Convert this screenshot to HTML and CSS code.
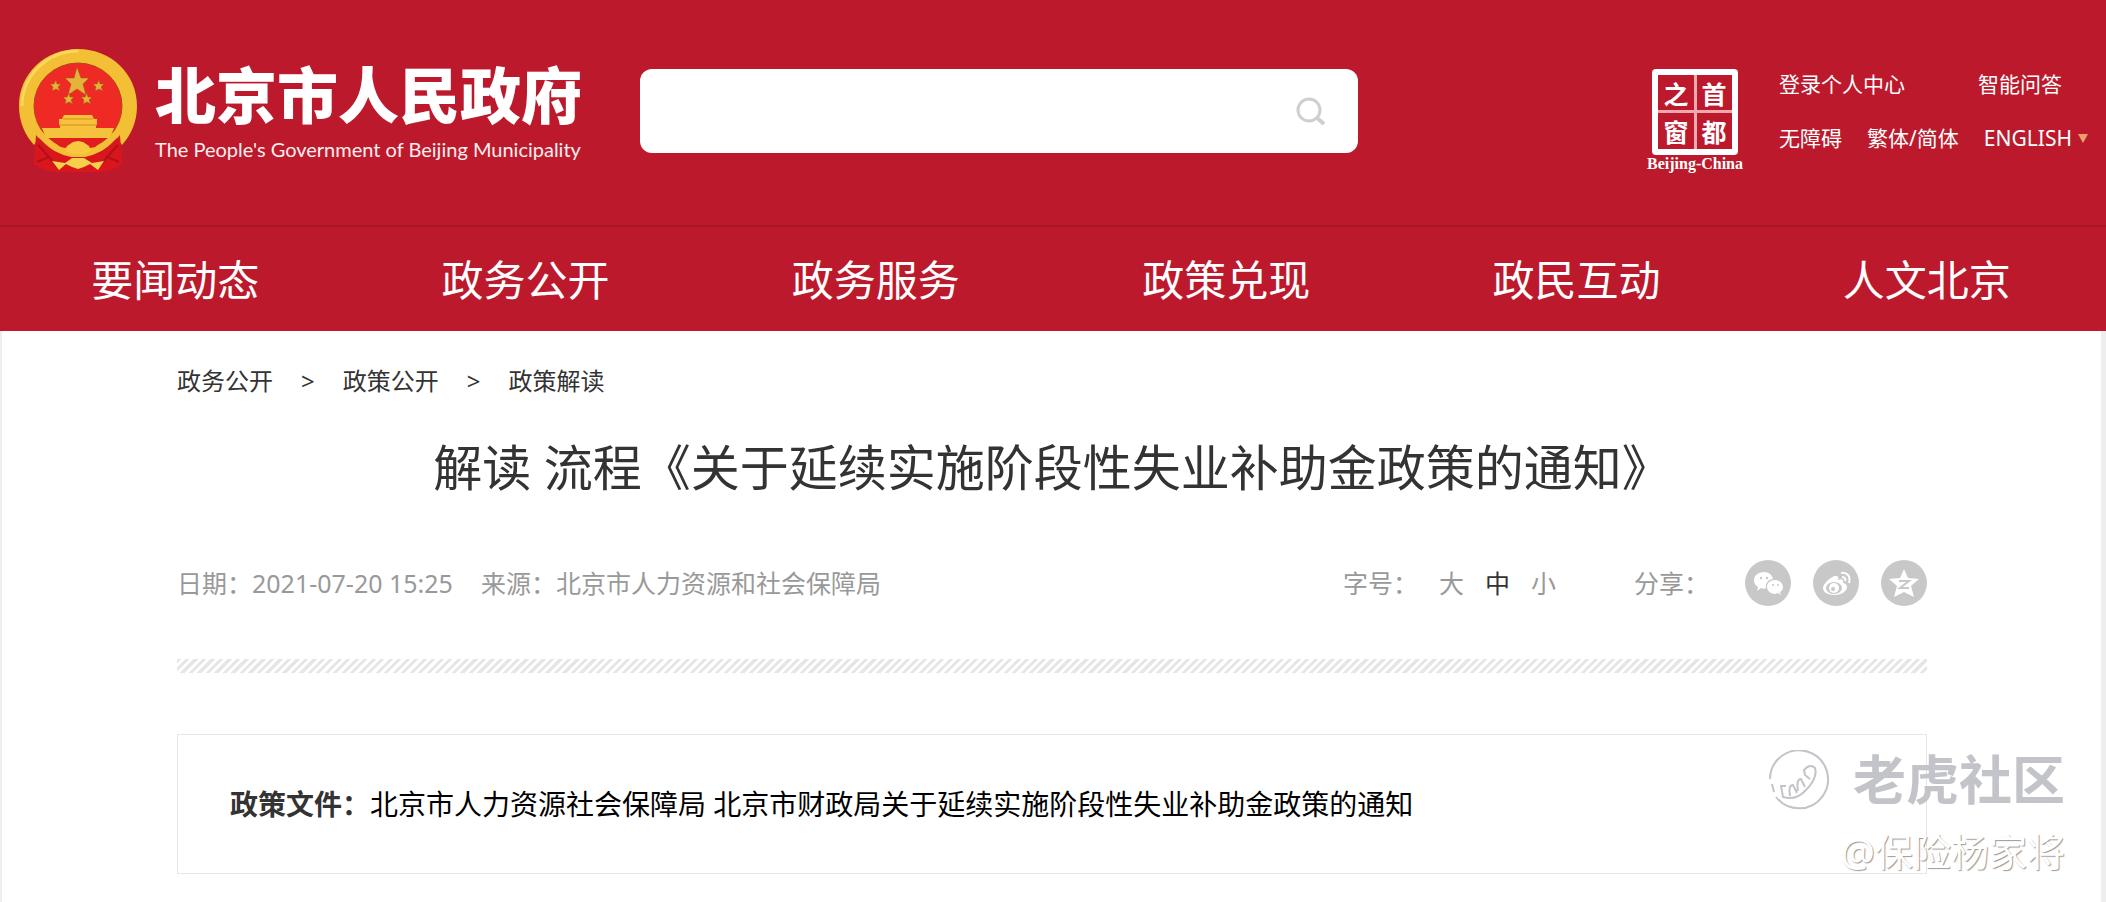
FILE: index.html
```html
<!DOCTYPE html>
<html lang="zh-CN">
<head>
    <meta charset="UTF-8">
    <meta name="viewport" content="width=device-width, initial-scale=1.0">
    <title>北京市人民政府</title>
    <link rel="stylesheet" href="styles.css">
</head>
<body>
    <!-- Header -->
    <header class="header">
        <div class="header-top">
            <a class="brand" href="#">
                <svg class="emblem" viewBox="0 0 118 124" aria-hidden="true">
                    <path d="M59 0 C26 0 0 25 0 57 C0 73 6 86 15 96 L20 89 Q34 104 50 110 L68 110 Q84 104 98 89 L103 96 C112 86 118 73 118 57 C118 25 92 0 59 0 Z" fill="#f3bf35"/>
                    <path d="M59 2 C28 2 3 27 3 57" fill="none" stroke="#fbd75e" stroke-width="3"/>
                    <ellipse cx="59" cy="57" rx="44" ry="43" fill="#ef2a24" stroke="#b5441b" stroke-width="1"/>
                    <path d="M30 89 H88 L76 98 Q70 100 66 96 L60 92 L52 96 Q46 101 40 97 Z" fill="#e01d1f"/>
                    <path d="M17 86 L22 92 Q34 104 52 108 L66 108 Q84 104 96 92 L101 86 L103 115 Q90 124 78 123 L40 123 Q28 124 15 115 Z" fill="#d8161b"/>
                    <path d="M19 96 L30 108 L18 113 M99 96 L88 108 L100 113 M30 108 L38 118 M88 108 L80 118" fill="none" stroke="#b30f18" stroke-width="2"/>
                    <g fill="#e5b23a" stroke="#a8561c" stroke-width="0.6">
                        <path d="M58 18 L62 29 L70 29 L64 35 L67 46 L58 40 L49 46 L52 35 L46 29 L55 29 Z"/>
                        <path d="M37 31 L38 35 L42 35 L39 38 L41 42 L37 40 L33 42 L34 38 L31 35 L35 35 Z"/>
                        <path d="M80 31 L81 35 L85 35 L82 38 L84 42 L80 40 L76 42 L77 38 L74 35 L78 35 Z"/>
                        <path d="M50 44 L51 48 L55 48 L52 51 L54 55 L50 53 L46 55 L47 51 L44 48 L48 48 Z"/>
                        <path d="M68 44 L69 48 L73 48 L70 51 L72 55 L68 53 L64 55 L65 51 L62 48 L66 48 Z"/>
                    </g>
                    <path d="M45 66 H73 L75 70 H78 V76 H40 V70 H43 Z M41 76 H77 V79 H95 L91 89 H27 L23 79 H41 Z" fill="#f6c23c"/>
                    <path d="M44 70 H74 M40 76 H78" stroke="#d98b22" stroke-width="1"/>
                    <path d="M59 92 L64 93 L70 97 L72 102 L64 105 H54 L46 102 L48 97 L54 93 Z" fill="#f8c93f"/>
                    <path d="M33 112 L46 114 L53 109 H65 L73 114 L85 112 L79 121 L71 115 L65 118 L59 120 L53 118 L47 115 L40 121 Z" fill="#f8cf4b"/>
                </svg>
                <span class="brand-text">
                    <span class="brand-name">北京市人民政府</span>
                    <span class="brand-sub">The People's Government of Beijing Municipality</span>
                </span>
            </a>

            <form class="search">
                <input type="text" class="search-input" aria-label="搜索">
                <button type="submit" class="search-button" aria-label="搜索">
                    <svg viewBox="0 0 30 28" aria-hidden="true">
                        <circle cx="13" cy="13" r="11" fill="none" stroke="#cfcfcf" stroke-width="3"/>
                        <path d="M21 21 L28 27" stroke="#cfcfcf" stroke-width="4"/>
                    </svg>
                </button>
            </form>

            <a class="seal" href="#">
                <span class="seal-box">
                    <span>之</span><span>首</span>
                    <span>窗</span><span>都</span>
                </span>
                <span class="seal-caption">Beijing-China</span>
            </a>

            <div class="header-links">
                <div class="link-row">
                    <a href="#">登录个人中心</a>
                    <a href="#">智能问答</a>
                </div>
                <div class="link-row">
                    <a href="#">无障碍</a>
                    <a href="#">繁体/简体</a>
                    <a href="#" class="language">ENGLISH</a>
                </div>
            </div>
        </div>

        <nav class="nav">
            <a href="#">要闻动态</a>
            <a href="#">政务公开</a>
            <a href="#">政务服务</a>
            <a href="#">政策兑现</a>
            <a href="#">政民互动</a>
            <a href="#">人文北京</a>
        </nav>
    </header>

    <!-- Article -->
    <main class="main">
        <div class="breadcrumb">
            <a href="#">政务公开</a>
            <span>&gt;</span>
            <a href="#">政策公开</a>
            <span>&gt;</span>
            <a href="#">政策解读</a>
        </div>

        <h1 class="title">解读 流程《关于延续实施阶段性失业补助金政策的通知》</h1>

        <div class="meta">
            <span class="date">日期：2021-07-20 15:25</span>
            <span class="source">来源：北京市人力资源和社会保障局</span>
            <div class="font-size">
                <span class="font-label">字号：</span>
                <button type="button">大</button>
                <button type="button" class="active">中</button>
                <button type="button">小</button>
            </div>
            <div class="share">
                <span class="share-label">分享：</span>
                <a href="#" aria-label="微信">
                    <svg viewBox="0 0 46 46" aria-hidden="true">
                        <circle cx="23" cy="23" r="23" fill="#c8c8c8"/>
                        <path d="M19 12 C13 12 9 16 9 20 C9 23 10 25 13 27 L12 31 L16 28 C18 29 20 29 21 28 C20 23 24 19 28 19 C27 15 24 12 19 12 Z" fill="#fff"/>
                        <path d="M30 20 C25 20 22 23 22 27 C22 31 26 34 30 34 L33 33 L36 35 L35 32 C37 31 38 29 38 27 C38 23 34 20 30 20 Z" fill="#fff"/>
                        <g fill="#c8c8c8">
                            <circle cx="16" cy="18" r="1.2"/>
                            <circle cx="22" cy="18" r="1.2"/>
                            <circle cx="28" cy="25" r="1"/>
                            <circle cx="33" cy="25" r="1"/>
                        </g>
                    </svg>
                </a>
                <a href="#" aria-label="微博">
                    <svg viewBox="0 0 46 46" aria-hidden="true">
                        <circle cx="23" cy="23" r="23" fill="#c8c8c8"/>
                        <path d="M23 16 C20 15 10 23 10 28 C10 33 16 35 22 35 C29 35 34 31 34 27 C34 24 31 23 30 23 C31 20 29 18 25 20 C26 17 25 16 23 16 Z" fill="#fff"/>
                        <ellipse cx="21" cy="28" rx="8" ry="6" fill="#c8c8c8"/>
                        <circle cx="21" cy="28" r="5" fill="#fff"/>
                        <circle cx="20" cy="29" r="2" fill="#c8c8c8"/>
                        <path d="M28 13 C34 12 38 16 36 23 M29 17 C32 17 33 19 32 21" fill="none" stroke="#fff" stroke-width="2"/>
                    </svg>
                </a>
                <a href="#" aria-label="QQ空间">
                    <svg viewBox="0 0 46 46" aria-hidden="true">
                        <circle cx="23" cy="23" r="23" fill="#c8c8c8"/>
                        <path d="M23 9 L27 18 L38 19 L30 26 L33 37 L23 32 L13 37 L16 26 L8 19 L19 18 Z" fill="#fff"/>
                        <path d="M18 21 H28 L19 28 H28" fill="none" stroke="#c8c8c8" stroke-width="2"/>
                    </svg>
                </a>
            </div>
        </div>

        <div class="stripe"></div>

        <div class="policy">
            <strong>政策文件：</strong><a href="#">北京市人力资源社会保障局 北京市财政局关于延续实施阶段性失业补助金政策的通知</a>
        </div>
    </main>

    <!-- Watermark -->
    <div class="watermark">
        <div class="watermark-brand">
            <svg viewBox="0 0 60 60" aria-hidden="true">
                <g fill="none" stroke="#c3c4c9" stroke-width="2">
                    <path d="M1 29 A29 29 0 1 1 7 47"/>
                    <path d="M3 34 L5 42 M12 36 L14 47 Q27 51 37 40 Q49 28 46 18 Q41 13 35 20 L36 25 L41 29"/>
                    <path d="M11 36 L17 36 M21 46 Q19 35 24 35 L28 43 M29 41 Q27 29 32 29 L36 37"/>
                </g>
            </svg>
            <span>老虎社区</span>
        </div>
        <div class="watermark-author">@保险杨家将</div>
    </div>
</body>
</html>
```

FILE: styles.css
```css
* {
    box-sizing: border-box;
}

body {
    margin: 0;
    min-height: 100vh;
    position: relative;
    display: flex;
    flex-direction: column;
    font-family: "Noto Sans", "Noto Sans CJK SC", sans-serif;
    background-color: #ffffff;
    color: #333333;
}

a {
    color: inherit;
    text-decoration: none;
}

/* Header */
.header {
    background-color: #bc1a2c;
    color: #ffffff;
}

.header-top {
    display: flex;
    align-items: center;
    height: 225px;
    padding: 0 18px 4px 19px;
}

.brand {
    display: flex;
    align-items: center;
    gap: 18px;
    flex-shrink: 0;
    width: 621px;
}

.emblem {
    width: 118px;
    height: 124px;
}

.brand-text {
    display: flex;
    flex-direction: column;
    gap: 8px;
    padding-top: 4px;
    white-space: nowrap;
}

.brand-name {
    font-family: "Noto Sans CJK SC", sans-serif;
    font-size: 61px;
    font-weight: 900;
    line-height: 64px;
}

.brand-sub {
    font-family: Lato, sans-serif;
    font-size: 20px;
    line-height: 32px;
    color: #ffeeee;
}

.search {
    display: flex;
    align-items: center;
    flex: 0 1 718px;
    height: 84px;
    padding-right: 32px;
    border-radius: 12px;
    background-color: #ffffff;
}

.search-input {
    flex: 1;
    min-width: 0;
    height: 100%;
    padding: 0 24px;
    border: none;
    outline: none;
    background: transparent;
    font-size: 24px;
}

.search-button {
    width: 30px;
    height: 28px;
    padding: 0;
    border: none;
    background: none;
    cursor: pointer;
}

.search-button svg {
    display: block;
}

.seal {
    display: flex;
    flex-direction: column;
    align-items: center;
    width: 96px;
    margin: 20px 0 0 auto;
}

.seal-box {
    display: grid;
    grid-template-columns: 1fr 1fr;
    gap: 2px;
    width: 86px;
    height: 86px;
    border: 6px solid #ffffff;
    border-radius: 4px;
    background: linear-gradient(#f0a9af, #f0a9af) center / 3px 100% no-repeat, linear-gradient(#f0a9af, #f0a9af) center / 100% 3px no-repeat;
    font-family: "Noto Sans CJK SC", sans-serif;
    font-size: 25px;
    font-weight: 700;
    line-height: 36px;
    text-align: center;
}

.seal-caption {
    font-family: "Liberation Serif", serif;
    font-size: 16px;
    font-weight: 700;
    line-height: 18px;
}

.header-links {
    display: flex;
    flex-direction: column;
    gap: 24px;
    width: 309px;
    margin-left: 36px;
    font-size: 21px;
    line-height: 30px;
    white-space: nowrap;
}

.link-row {
    display: flex;
    justify-content: space-between;
}

.link-row:first-child {
    padding-right: 26px;
}

.language::after {
    content: "";
    display: inline-block;
    margin-left: 6px;
    border: 5px solid transparent;
    border-top: 9px solid #eda06f;
    border-bottom: none;
    vertical-align: 3px;
}

.nav {
    display: grid;
    grid-template-columns: repeat(6, 1fr);
    padding: 2px 4px 0 0;
    border-top: 2px solid #a91522;
    font-size: 42px;
    line-height: 102px;
    text-align: center;
}

/* Article */
.main {
    flex: 1;
    padding: 32px 174px 26px 175px;
    border-left: 2px solid #eeeeee;
    border-right: 5px solid #eeeeee;
}

.breadcrumb {
    display: flex;
    gap: 28px;
    font-size: 24px;
    line-height: 36px;
}

.title {
    margin: 32px 0 0;
    font-size: 49px;
    font-weight: 400;
    line-height: 72px;
    text-align: center;
}

.meta {
    display: flex;
    align-items: center;
    margin-top: 57px;
    font-size: 25px;
    line-height: 46px;
    color: #999999;
}

.source {
    margin-left: 28px;
}

.font-size {
    display: flex;
    gap: 21px;
    margin-left: auto;
}

.font-size button {
    padding: 0;
    border: none;
    background: none;
    font: inherit;
    color: inherit;
    cursor: pointer;
}

.font-size .active {
    color: #333333;
}

.share {
    display: flex;
    gap: 22px;
    margin-left: 78px;
}

.share-label {
    margin-right: 14px;
}

.share svg {
    display: block;
    width: 46px;
    height: 46px;
}

.stripe {
    height: 14px;
    margin-top: 53px;
    background: repeating-linear-gradient(135deg, #e6e6e6 0, #e6e6e6 3px, #ffffff 3px, #ffffff 6px);
}

.policy {
    margin-top: 61px;
    padding: 48px 52px;
    border: 1px solid #e6e6e6;
    font-size: 28px;
    line-height: 42px;
}

.policy a {
    color: #000000;
}

/* Watermark */
.watermark {
    position: absolute;
    right: 41px;
    bottom: 24px;
    display: flex;
    flex-direction: column;
    align-items: flex-end;
    gap: 14px;
    white-space: nowrap;
    pointer-events: none;
}

.watermark-brand {
    display: flex;
    align-items: center;
    gap: 24px;
    font-size: 53px;
    font-weight: 700;
    line-height: 60px;
    color: #c3c4c9;
}

.watermark-brand svg {
    width: 60px;
    height: 60px;
}

.watermark-author {
    font-size: 38px;
    line-height: 54px;
    color: #ffffff;
    text-shadow: 1px 1px 1px #999999;
}
```
